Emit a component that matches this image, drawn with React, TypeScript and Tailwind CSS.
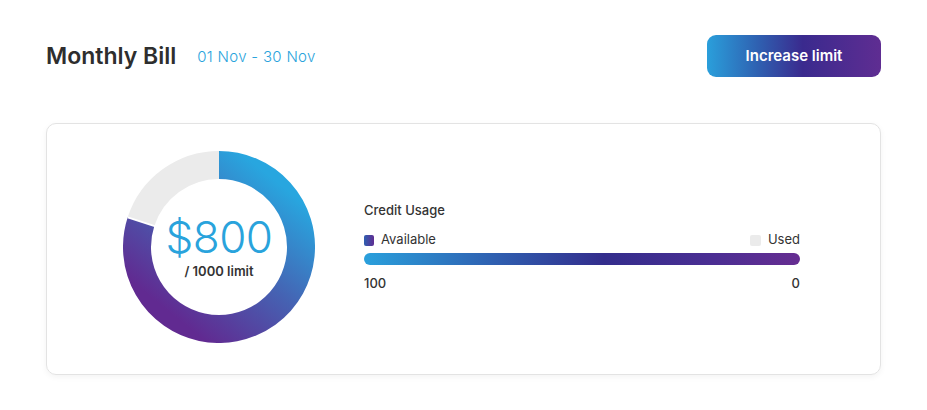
import React from "react";

const font = { fontFamily: "Inter, 'Noto Sans', sans-serif" };

const Donut: React.FC = () => {
  const cx = 96;
  const r = 82;
  // 80% available, drawn clockwise from 12 o'clock
  const end = (288 * Math.PI) / 180;
  const ex = cx + r * Math.sin(end);
  const ey = cx - r * Math.cos(end);
  const gx = cx + 96 * Math.sin(end);
  const gy = cx - 96 * Math.cos(end);
  const ix = cx + 66 * Math.sin(end);
  const iy = cx - 66 * Math.cos(end);

  return (
    <div className="relative w-[192px] h-[192px] shrink-0">
      <svg width="192" height="192" viewBox="0 0 192 192">
        <defs>
          <linearGradient id="ring" x1="0.85" y1="0.1" x2="0.2" y2="0.9">
            <stop offset="0" stopColor="#28a6df" />
            <stop offset="0.5" stopColor="#4563b3" />
            <stop offset="1" stopColor="#612a91" />
          </linearGradient>
        </defs>
        <path
          d={`M ${ex} ${ey} A ${r} ${r} 0 0 1 ${cx} ${cx - r}`}
          fill="none"
          stroke="#ebebeb"
          strokeWidth="28"
        />
        <path
          d={`M ${cx} ${cx - r} A ${r} ${r} 0 1 1 ${ex} ${ey}`}
          fill="none"
          stroke="url(#ring)"
          strokeWidth="28"
        />
        <line x1={ix} y1={iy} x2={gx} y2={gy} stroke="#fff" strokeWidth="2" />
      </svg>
      <div className="absolute inset-0 flex flex-col items-center justify-center pt-[2px]">
        <span className="text-[44px] leading-none font-light text-[#29a3dc] tracking-[-0.5px]">
          $800
        </span>
        <span className="text-[13px] font-semibold text-[#333] mt-[3px]">
          / 1000 limit
        </span>
      </div>
    </div>
  );
};

export default function App() {
  return (
    <div className="w-[927px] h-[410px] bg-white px-[46px] pt-[35px]" style={font}>
      {/* Header */}
      <div className="flex items-center justify-between">
        <div className="flex items-center gap-[21px]">
          <h1 className="text-[23px] font-semibold text-[#2e2e2e]">Monthly Bill</h1>
          <span className="text-[15px] font-light text-[#29a3dc] tracking-[0.3px] pt-[2px]">
            01 Nov - 30 Nov
          </span>
        </div>
        <button className="w-[174px] h-[42px] rounded-[9px] text-white text-[15px] font-semibold bg-[linear-gradient(90deg,#2a9fdb_0%,#2f5fb0_30%,#3a2a8e_55%,#5f2d92_100%)]">
          Increase limit
        </button>
      </div>

      {/* Card */}
      <div className="mt-[46px] h-[252px] rounded-[10px] border border-[#e3e3e3] shadow-[0_2px_6px_rgba(0,0,0,0.05)] flex items-center pl-[76px] pr-[80px] pb-[4px]">
        <Donut />
        <div className="flex-1 ml-[49px] text-[13px] text-[#333]">
          <div className="font-medium mb-[10px]">Credit Usage</div>
          <div className="flex items-center justify-between">
            <div className="flex items-center gap-[7px]">
              <span className="w-[10px] h-[11px] rounded-[2px] bg-[linear-gradient(90deg,#2f5fb0,#5f2d92)]" />
              <span>Available</span>
            </div>
            <div className="flex items-center gap-[7px]">
              <span className="w-[11px] h-[11px] rounded-[2px] bg-[#ebebeb]" />
              <span>Used</span>
            </div>
          </div>
          <div className="mt-[3px] h-[12px] rounded-full bg-[linear-gradient(90deg,#2aa0dc_0%,#2f5fb0_30%,#332d8c_55%,#4b2e93_80%,#662d91_100%)]" />
          <div className="mt-[9px] flex justify-between font-medium">
            <span>100</span>
            <span>0</span>
          </div>
        </div>
      </div>
    </div>
  );
}
